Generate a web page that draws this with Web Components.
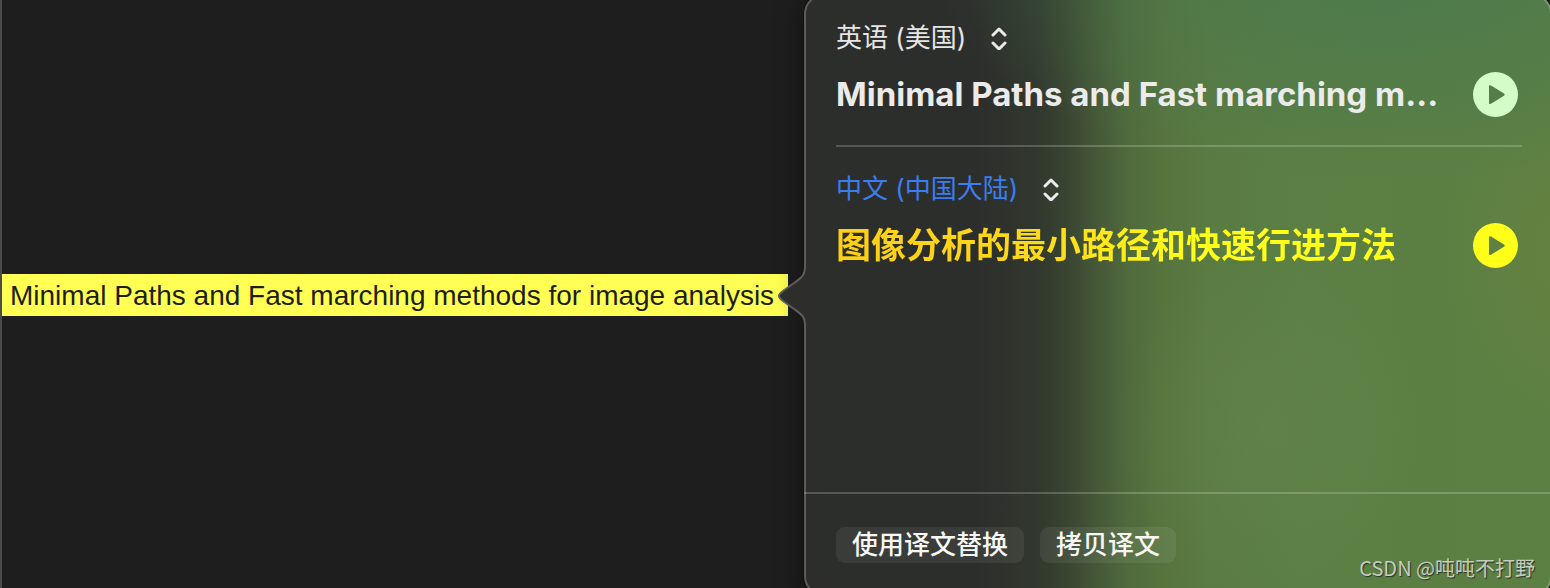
<!DOCTYPE html>
<html lang="zh-CN">
<head>
<meta charset="utf-8">
<meta name="viewport" content="width=device-width, initial-scale=1">
<title>翻译</title>
<style>
    body {
        margin: 0;
        background: #1e1e1e;
        font-family: Inter, "Noto Sans CJK SC", sans-serif;
    }
</style>
</head>
<body>
<translate-page>
    <marked-text slot="editor">Minimal Paths and Fast marching methods for image analysis</marked-text>
    <translate-popover slot="popover">
        <translate-entry language="英语 (美国)" label="原文语言">Minimal Paths and Fast marching m...</translate-entry>
        <translate-entry language="中文 (中国大陆)" label="译文语言" translated>图像分析的最小路径和快速行进方法</translate-entry>
        <action-button slot="actions">使用译文替换</action-button>
        <action-button slot="actions">拷贝译文</action-button>
    </translate-popover>
    <span slot="watermark">CSDN @吨吨不打野</span>
</translate-page>

<script>
class TranslatePage extends HTMLElement {
    constructor() {
        super();
        this.attachShadow({ mode: "open" });
        this.shadowRoot.innerHTML = `
            <style>
            :host {
                display: grid;
                grid-template-columns: 804px minmax(0, 1fr);
                min-height: 100vh;
                position: relative;
                overflow: hidden;
            }
            .editor {
                display: flex;
                align-items: center;
                box-sizing: border-box;
                padding: 2px 16px 0 0;
                border-left: 2px solid #4b4b4b;
            }
            .watermark {
                position: absolute;
                right: 15px;
                bottom: 6px;
                font: 20px/28px "Noto Sans CJK SC", sans-serif;
                color: #c6ccc2;
                text-shadow: 1px 1px 1px #26331f;
                pointer-events: none;
            }
            </style>
            <main class="editor"><slot name="editor"></slot></main>
            <slot name="popover"></slot>
            <div class="watermark"><slot name="watermark"></slot></div>
        `;
    }
}

class MarkedText extends HTMLElement {
    constructor() {
        super();
        this.attachShadow({ mode: "open" });
        this.shadowRoot.innerHTML = `
            <style>
            :host {
                display: block;
                flex: 1;
            }
            mark {
                display: block;
                padding: 2px 0 0 8px;
                background: #ffff54;
                color: #1e1e14;
                font: 28px/40px "Liberation Sans", Arial, sans-serif;
                white-space: nowrap;
            }
            </style>
            <mark><slot></slot></mark>
        `;
    }
}

class TranslatePopover extends HTMLElement {
    constructor() {
        super();
        this.attachShadow({ mode: "open" });
        this.shadowRoot.innerHTML = `
            <style>
            :host {
                display: flex;
                flex-direction: column;
                position: relative;
            }
            /* the frame runs past the window edges, so only its corners show */
            .frame {
                position: absolute;
                inset: -6px -2px -8px 0;
                border: 2px solid rgba(255, 255, 255, 0.22);
                border-radius: 20px;
                box-shadow: 0 0 0 1px #111, 0 8px 28px rgba(0, 0, 0, 0.5);
                background:
                    radial-gradient(ellipse 60% 34% at 78% -3%, rgba(74, 120, 78, 0.8), rgba(74, 120, 78, 0.5) 45%, rgba(74, 120, 78, 0)) border-box,
                    radial-gradient(ellipse 16% 30% at 102% 43%, rgba(104, 130, 64, 0.8), rgba(104, 130, 64, 0)) border-box,
                    radial-gradient(ellipse 20% 30% at 62% 72%, rgba(100, 132, 78, 0.6), rgba(100, 132, 78, 0)) border-box,
                    linear-gradient(90deg, #2d2e2b 0%, #2c2e2b 23%, #31372e 31%, #394431 35%, #455738 39%, #4f693c 43%, #57743f 48%, #5a7b42 54%, #5b7f44 66%, #5b8043 100%) border-box;
            }
            .arrow {
                position: absolute;
                left: -28px;
                top: calc(50% - 32px);
            }
            .entries, footer {
                position: relative;
            }
            .entries {
                flex: 1;
                display: flex;
                flex-direction: column;
                gap: 22px;
                padding: 18px 28px 22px 32px;
            }
            footer {
                display: flex;
                gap: 16px;
                padding: 33px 28px 25px 32px;
                border-top: 2px solid rgba(255, 255, 255, 0.2);
            }
            </style>
            <div class="frame"></div>
            <svg class="arrow" width="32" height="68" viewBox="0 0 32 68" aria-hidden="true">
                <path d="M31 4 H29 C29 14 25 16 18 21 L7 29 Q3 32 3 34 Q3 36 7 39 L18 47 C25 52 29 54 29 64 H31 Z" fill="#2d2e2b"/>
                <path d="M29 4 C29 14 25 16 18 21 L7 29 Q3 32 3 34 Q3 36 7 39 L18 47 C25 52 29 54 29 64" fill="none" stroke="#5c5e5b" stroke-width="2"/>
            </svg>
            <div class="entries"><slot></slot></div>
            <footer><slot name="actions"></slot></footer>
        `;
    }
}

class TranslateEntry extends HTMLElement {
    constructor() {
        super();
        this.attachShadow({ mode: "open" });

        const language = this.getAttribute("language");
        const label = this.getAttribute("label");

        this.shadowRoot.innerHTML = `
            <style>
            :host {
                display: block;
                --accent: #d3fcc8;
                --language: #e6e6e6;
            }
            :host(:not([translated])) {
                padding-bottom: 28px;
                border-bottom: 2px solid rgba(255, 255, 255, 0.2);
            }
            :host([translated]) {
                --accent: #ffff1a;
                --language: #3b7df0;
            }
            .language {
                display: inline-flex;
                align-items: center;
                gap: 24px;
                height: 40px;
            }
            select {
                appearance: none;
                margin: 0;
                padding: 0;
                border: 0;
                background: none;
                color: var(--language);
                font: 26px/40px Inter, "Noto Sans CJK SC", sans-serif;
            }
            .language svg {
                pointer-events: none;
            }
            .row {
                display: flex;
                align-items: center;
                justify-content: space-between;
                gap: 24px;
                margin-top: 14px;
                padding-right: 4px;
            }
            h2 {
                margin: 0;
                min-width: 0;
                overflow: hidden;
                white-space: nowrap;
                color: #ebebeb;
                font: 700 33px/45px Inter, "Noto Sans CJK SC", sans-serif;
            }
            :host([translated]) h2 {
                font-size: 35px;
                color: transparent;
                background: linear-gradient(90deg, #fdcf17 0%, #fdd818 35%, #ffff1a 65%);
                -webkit-background-clip: text;
                background-clip: text;
            }
            button {
                flex: none;
                display: block;
                padding: 0;
                border: 0;
                background: none;
                color: var(--accent);
                cursor: pointer;
            }
            button svg {
                display: block;
            }
            </style>
            <label class="language">
                <select aria-label="${label}"><option>${language}</option></select>
                <svg width="16" height="24" viewBox="0 0 16 24" fill="none" stroke="#ebebeb" stroke-width="3" stroke-linecap="round" stroke-linejoin="round" aria-hidden="true">
                    <path d="M2 9 L8 3 L14 9 M2 17 L8 23 L14 17"/>
                </svg>
            </label>
            <div class="row">
                <h2><slot></slot></h2>
                <button type="button" aria-label="播放">
                    <svg width="45" height="45" viewBox="0 0 45 45" fill="currentColor" fill-rule="evenodd">
                        <path d="M22.5 0 A22.5 22.5 0 1 1 22.5 45 A22.5 22.5 0 1 1 22.5 0 Z M16 14.6 V30.6 Q16 32.8 18 31.8 L31 23.8 Q32.6 22.6 31 21.4 L18 13.5 Q16 12.4 16 14.6 Z"/>
                    </svg>
                </button>
            </div>
        `;
    }
}

class ActionButton extends HTMLElement {
    constructor() {
        super();
        this.attachShadow({ mode: "open" });
        this.shadowRoot.innerHTML = `
            <style>
            :host {
                display: block;
            }
            button {
                display: block;
                height: 36px;
                padding: 0 16px;
                border: 0;
                border-radius: 9px;
                background: rgba(255, 255, 255, 0.07);
                color: #f7f8f6;
                font: 500 26px/36px Inter, "Noto Sans CJK SC", sans-serif;
                cursor: pointer;
            }
            </style>
            <button type="button"><slot></slot></button>
        `;
    }
}

customElements.define("translate-page", TranslatePage);
customElements.define("marked-text", MarkedText);
customElements.define("translate-popover", TranslatePopover);
customElements.define("translate-entry", TranslateEntry);
customElements.define("action-button", ActionButton);
</script>
</body>
</html>
